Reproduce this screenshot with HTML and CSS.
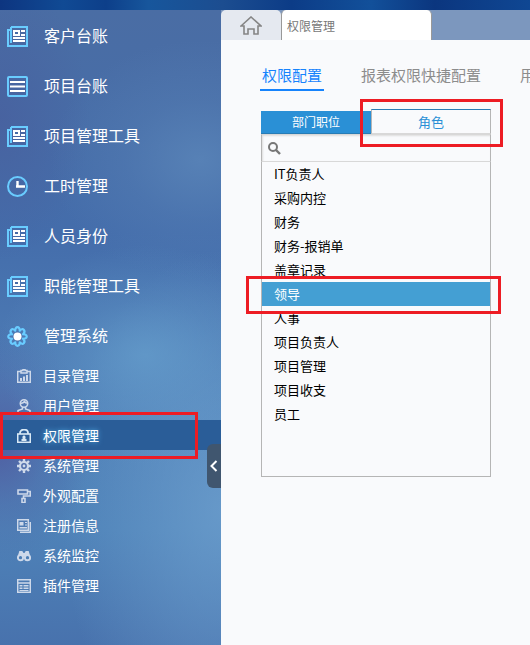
FILE: index.html
```html
<!DOCTYPE html>
<html lang="zh-CN">
<head>
    <meta charset="UTF-8">
    <meta name="viewport" content="width=device-width, initial-scale=1.0">
    <title>权限管理</title>
    <link rel="stylesheet" href="styles.css">
</head>
<body>
    <!-- shared menu icon -->
    <svg class="symbols" width="0" height="0" aria-hidden="true">
        <symbol id="icon-paper" viewBox="0 0 21 21">
            <path d="M4 1H20V20H1V4H4M4 1V17" fill="none" stroke="#69ccff" stroke-width="2"/>
            <path d="M6 4h7v6H6zM14 4h4v2h-4zM14 8h4v2h-4zM6 11h12v2H6zM6 14h12v2H6z" fill="#fff"/>
            <path d="M8 6h3v2H8z" fill="#476ba7"/>
        </symbol>
    </svg>

    <div class="layout">
        <nav class="sidebar">
            <ul class="menu">
                <li><a href="#customer"><svg class="icon"><use href="#icon-paper"/></svg>客户台账</a></li>
                <li><a href="#project"><svg class="icon" viewBox="0 0 21 21"><rect x="1" y="1" width="19" height="19" rx="1" fill="none" stroke="#69ccff" stroke-width="2"/><path d="M3 6h15M3 10.5h15M3 15h15" stroke="#fff" stroke-width="2"/></svg>项目台账</a></li>
                <li><a href="#project-tools"><svg class="icon"><use href="#icon-paper"/></svg>项目管理工具</a></li>
                <li><a href="#hours"><svg class="icon" viewBox="0 0 21 21"><circle cx="10.500" cy="10.500" r="9.500" fill="none" stroke="#69ccff" stroke-width="2"/><path d="M10.500 5V11M9 10.500H18" fill="none" stroke="#fff" stroke-width="2.400"/></svg>工时管理</a></li>
                <li><a href="#people"><svg class="icon"><use href="#icon-paper"/></svg>人员身份</a></li>
                <li><a href="#function-tools"><svg class="icon"><use href="#icon-paper"/></svg>职能管理工具</a></li>
                <li>
                    <a href="#system"><svg class="icon" viewBox="0 0 21 21"><path d="M8.300 4.700C7.800 0 13.200 0 12.700 4.700C15.700 1 19.500 4.900 16 8.300C21 7.800 21 13.200 16 12.700C19.500 16.100 15.700 20 12.700 16.300C13.200 21 7.800 21 8.300 16.300C5.300 20 1.500 16.100 5 12.700C0 13.200 0 7.800 5 8.300C1.500 4.900 5.300 1 8.300 4.700Z" fill="none" stroke="#69ccff" stroke-width="2.200" stroke-linejoin="round"/><circle cx="10.500" cy="10.500" r="4" fill="#fff"/></svg>管理系统</a>
                    <ul class="submenu">
                        <li><a href="#catalog"><svg class="icon-small" viewBox="0 0 14 14"><path d="M4 2.500H.700v10.800h12.600V2.500H10M4 1.500h2V.500h2v1h2V4H4z" fill="none" stroke="#ced9ea" stroke-width="1.500"/><path d="M3 9h2v3H3zM6 7.500h2V12H6zM9 6h2v6H9z" fill="#ced9ea"/></svg>目录管理</a></li>
                        <li><a href="#users"><svg class="icon-small" viewBox="0 0 14 14"><circle cx="7" cy="4.500" r="3.700" fill="none" stroke="#ced9ea" stroke-width="1.600"/><path d="M3.800 4.200Q6 4.500 7.500 2.500Q8.500 4 10 4M5.500 8v2L1 11.500V14M8.500 8v2l4.500 1.500V14" fill="none" stroke="#ced9ea" stroke-width="1.500"/></svg>用户管理</a></li>
                        <li class="current"><a href="#rights"><svg class="icon-small" viewBox="0 0 14 14"><rect x=".700" y="5" width="12.600" height="8.300" fill="none" stroke="#d8e9f5" stroke-width="1.600"/><path d="M3 5V4C3-.500 11-.500 11 4V5" fill="none" stroke="#d8e9f5" stroke-width="1.800"/><path d="M7 6.500a1.700 1.700 0 0 1 1 3l1.500.500v2h-5v-2L6 9.500a1.700 1.700 0 0 1 1-3" fill="#d8e9f5"/></svg>权限管理</a></li>
                        <li><a href="#settings"><svg class="icon-small" viewBox="0 0 14 14"><circle cx="7" cy="7" r="4" fill="none" stroke="#ced9ea" stroke-width="2.200"/><circle cx="7" cy="7" r="1.400" fill="#ced9ea"/><path d="M7 0v3M7 11v3M0 7h3M11 7h3M2 2l2 2M10 10l2 2M12 2l-2 2M4 10l-2 2" stroke="#ced9ea" stroke-width="2.400"/></svg>系统管理</a></li>
                        <li><a href="#appearance"><svg class="icon-small" viewBox="0 0 14 14"><path d="M1 1h9.500v4H1zM11 2.500h2.200V7H6.500v3M5 9.500h3v4H5z" fill="none" stroke="#ced9ea" stroke-width="1.600"/></svg>外观配置</a></li>
                        <li><a href="#registration"><svg class="icon-small" viewBox="0 0 14 14"><path d="M.700.700h10.600v10.600H.700zM13.300 3v10.300H3" fill="none" stroke="#ced9ea" stroke-width="1.500"/><path d="M2.500 3h4v3.500h-4zM8 3h2v1H8zM8 5.500h2v1H8zM2.500 8H10v1.500H2.500z" fill="#ced9ea"/></svg>注册信息</a></li>
                        <li><a href="#monitor"><svg class="icon-small" viewBox="0 0 14 14"><circle cx="3.500" cy="8.700" r="2.600" fill="none" stroke="#ced9ea" stroke-width="1.900"/><circle cx="10.500" cy="8.700" r="2.600" fill="none" stroke="#ced9ea" stroke-width="1.900"/><path d="M1 6.500L2.300 2h3L6.500 4h1L8.700 2h3L13 6.500Q10 5 7 8Q4 5 1 6.500" fill="#ced9ea"/></svg>系统监控</a></li>
                        <li><a href="#plugins"><svg class="icon-small" viewBox="0 0 14 14"><path d="M.700.700h12.600v12.600H.700zM1 4h12" fill="none" stroke="#ced9ea" stroke-width="1.500"/><path d="M2.500 6h3v1.500h-3zM6.500 6h5v1.500h-5zM2.500 8.500h3V10h-3zM6.500 8.500h5V10h-5zM2.500 11h9v1h-9z" fill="#ced9ea"/></svg>插件管理</a></li>
                    </ul>
                </li>
            </ul>
            <button class="collapse" type="button" aria-label="收起菜单"><svg width="8" height="12" viewBox="0 0 8 12"><path d="M6.500 1L1.500 6l5 5" fill="none" stroke="#fff" stroke-width="2"/></svg></button>
        </nav>

        <main class="content">
            <div class="page-tabs">
                <a class="home-tab" href="#home" aria-label="首页"><svg width="22" height="19" viewBox="0 0 22 19"><path d="M1 10L11 1l10 9h-3v8h-4v-5H8v5H4v-8z" fill="none" stroke="#858585" stroke-width="1.600"/></svg></a>
                <a class="page-tab" href="#rights">权限管理</a>
            </div>

            <div class="config-tabs">
                <a class="active" href="#rights-config">权限配置</a>
                <a href="#report-config">报表权限快捷配置</a>
                <a href="#user-config">用</a>
            </div>

            <section class="picker">
                <div class="picker-tabs">
                    <button type="button">部门职位</button>
                    <button class="selected" type="button">角色</button>
                </div>
                <label class="search">
                    <svg width="13" height="13" viewBox="0 0 13 13"><circle cx="5" cy="5" r="4" fill="none" stroke="#777" stroke-width="2"/><path d="M8 8l4 4" stroke="#777" stroke-width="2.400"/></svg>
                    <input type="text" aria-label="搜索角色">
                </label>
                <ul class="roles">
                    <li><a href="#role">IT负责人</a></li>
                    <li><a href="#role">采购内控</a></li>
                    <li><a href="#role">财务</a></li>
                    <li><a href="#role">财务-报销单</a></li>
                    <li><a href="#role">盖章记录</a></li>
                    <li class="selected"><a href="#role">领导</a></li>
                    <li><a href="#role">人事</a></li>
                    <li><a href="#role">项目负责人</a></li>
                    <li><a href="#role">项目管理</a></li>
                    <li><a href="#role">项目收支</a></li>
                    <li><a href="#role">员工</a></li>
                </ul>
            </section>
        </main>
    </div>
</body>
</html>
```
FILE: styles.css
```css
* {
    box-sizing: border-box;
}

body {
    margin: 0;
    min-height: 100vh;
    padding-top: 10px;
    display: flex;
    flex-direction: column;
    background: linear-gradient(90deg, #0d3580 0%, #104a94 12%, #0d3f8a 20%, #17569c 28%, #1c4d90 42%, #0c3c87 55%, #12509a 70%, #0b367f 82%, #0f4793 100%);
    font-family: "Noto Sans CJK SC", sans-serif;
    overflow-x: hidden;
}

ul {
    list-style: none;
    margin: 0;
    padding: 0;
}

a {
    color: inherit;
    text-decoration: none;
}

button {
    font-family: inherit;
    border: none;
    padding: 0;
    cursor: pointer;
}

.symbols {
    position: absolute;
}

.layout {
    flex: 1;
    display: flex;
}

/* sidebar */
.sidebar {
    position: relative;
    flex: 0 0 221px;
    color: #fff;
    background:
        radial-gradient(ellipse 150px 110px at 145px 345px, rgba(100, 156, 203, 0.8), rgba(100, 156, 203, 0.3) 50%, transparent),
        radial-gradient(ellipse 150px 120px at 200px 150px, rgba(91, 134, 185, 0.8), rgba(91, 134, 185, 0.3) 50%, transparent),
        radial-gradient(ellipse 90px 120px at 0 435px, rgba(80, 92, 160, 0.9), rgba(80, 92, 160, 0.3) 50%, transparent),
        radial-gradient(ellipse 160px 260px at 221px 500px, rgba(108, 158, 205, 0.8), rgba(108, 158, 205, 0.4) 50%, transparent),
        radial-gradient(ellipse 90px 140px at 0 110px, rgba(72, 94, 157, 0.7), transparent),
        linear-gradient(180deg, #4a6da4 0%, #446dab 35%, #4f7fb7 62%, #4e82b8 82%, #4872ad 100%);
}

.menu > li > a {
    display: flex;
    align-items: center;
    gap: 16px;
    height: 50px;
    padding-left: 7px;
    font-size: 16px;
    line-height: 24px;
}

.icon {
    width: 21px;
    height: 21px;
    margin-top: 2px;
}

.submenu a {
    display: flex;
    align-items: center;
    gap: 12px;
    height: 30px;
    padding-left: 17px;
    font-size: 14px;
    line-height: 20px;
}

.icon-small {
    width: 14px;
    height: 14px;
    margin-top: 2px;
}

.submenu .current {
    position: relative;
    background-color: #2a5d98;
    text-shadow: 0 0 5px #57b8ef;
}

.collapse {
    position: absolute;
    right: 0;
    top: 434px;
    width: 14px;
    height: 44px;
    display: flex;
    align-items: center;
    justify-content: center;
    background-color: #40566f;
    border-radius: 6px 0 0 6px;
}

/* red marks around the steps */
.submenu .current::after,
.picker-tabs .selected::after,
.roles .selected::after {
    content: "";
    position: absolute;
    z-index: 2;
    border: 3px solid #ed1c24;
    pointer-events: none;
}

.submenu .current::after {
    inset: -8px 23px -9px 0;
}

.picker-tabs .selected::after {
    inset: -11px -13px -14px -12px;
}

.roles .selected::after {
    inset: -6px -11px -8px -16px;
}

/* content */
.content {
    flex: 1;
    min-width: 0;
    overflow: hidden;
    background-color: #f9fafc;
}

.page-tabs {
    display: flex;
    height: 30px;
    background-color: #7c97be;
}

.home-tab {
    width: 60px;
    display: flex;
    align-items: center;
    justify-content: center;
    background-color: #e5e9f0;
    border-radius: 5px 5px 0 0;
}

.page-tab {
    width: 151px;
    padding: 0 5px;
    background-color: #fff;
    border: solid #999;
    border-width: 0 1px;
    border-radius: 5px 5px 0 0;
    color: #777;
    font-size: 12px;
    line-height: 32px;
}

.config-tabs {
    display: flex;
    gap: 35px;
    padding: 20px 0 0 39px;
    color: #8c8c8c;
    font-size: 15px;
    line-height: 29px;
    white-space: nowrap;
}

.config-tabs a {
    padding: 0 2px;
    border-bottom: 2px solid transparent;
}

.config-tabs .active {
    color: #1683fc;
    border-color: #1683fc;
}

.picker {
    width: 230px;
    margin: 18px 0 0 40px;
}

.picker-tabs {
    display: flex;
    align-items: flex-end;
}

.picker-tabs button {
    width: 110px;
    height: 23px;
    background-color: #2a90d6;
    border-bottom: 1px solid #287cb5;
    color: #fff;
    font-size: 12px;
    line-height: 20px;
}

.picker-tabs .selected {
    position: relative;
    width: 120px;
    height: 25px;
    background-color: #f9fafc;
    border: 1px solid #b5b5b5;
    border-top-color: #287cb5;
    border-bottom-color: #d8d8d8;
    color: #2a90d6;
    font-size: 13px;
}

.search {
    display: flex;
    align-items: center;
    gap: 6px;
    height: 28px;
    padding: 0 6px;
    border: 1px solid #b5b5b5;
    border-top-color: #d8d8d8;
    border-bottom-color: #d8d8d8;
    box-shadow: inset 1px 1px 2px #ddd;
}

.search input {
    flex: 1;
    min-width: 0;
    border: none;
    outline: none;
    background: none;
    font-size: 13px;
}

.roles {
    min-height: 315px;
    border: 1px solid #b5b5b5;
    border-top: none;
    color: #000;
    font-size: 13px;
    line-height: 24px;
}

.roles a {
    display: block;
    padding-left: 12px;
}

.roles .selected {
    position: relative;
    background-color: #449fd3;
    color: #fff;
}
```
